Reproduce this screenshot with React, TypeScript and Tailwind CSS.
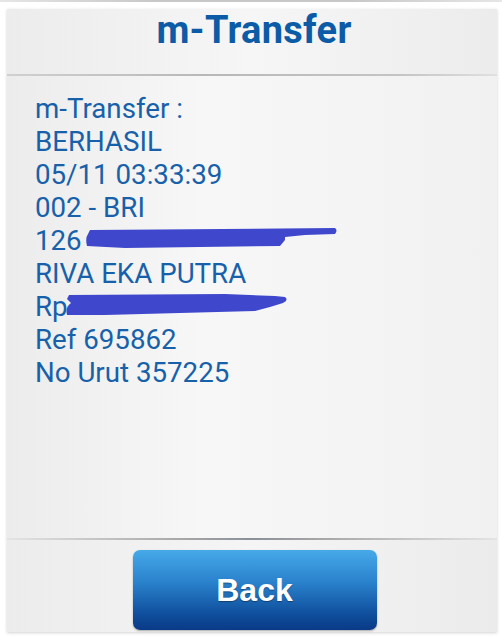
import React from "react";

const lines = [
  "m-Transfer :",
  "BERHASIL",
  "05/11 03:33:39",
  "002 - BRI",
];

export default function App() {
  return (
    <div className="w-[502px] h-[638px] bg-white relative overflow-hidden" style={{ fontFamily: "Roboto, 'Liberation Sans', sans-serif" }}>
      <div className="h-[2px] w-full bg-[linear-gradient(to_right,#e6e6e6,#c8c8c8_30%,#c8c8c8_70%,#e6e6e6)]" />
      <div className="mt-[7px] ml-[7px] w-[490px] h-[623px] flex flex-col bg-[#f2f2f2] shadow-[0_1px_3px_rgba(0,0,0,0.18)]">
        <div className="h-[65px] pt-[2px] pl-[4px] text-center bg-[linear-gradient(to_right,#ececec,#f6f6f6_50%,#ececec)]">
          <div className="text-[38px] leading-[38px] font-bold text-[#0b5ba7] tracking-[0.3px]">m-Transfer</div>
        </div>
        <div className="h-[2px] bg-[linear-gradient(to_right,#d0d0d0,#b8b8b8_40%,#c4c4c4_80%,#e0e0e0)]" />
        <div className="h-[462px] pt-[16px] pl-[28px] text-[27.7px] leading-[33px] text-[#1761aa] bg-[linear-gradient(to_right,#ececec,#f7f7f7_40%,#f1f1f1)]">
          {lines.map((l) => (
            <div key={l}>{l}</div>
          ))}
          <div className="relative">
            126
            <svg className="absolute left-[50px] top-[2px]" width="260" height="24" viewBox="0 0 260 24">
              <path d="M5 4 L250 2 Q253 4 250 8 L220 9 L200 11 L200 14 L195 20 L40 22 L2 20 Q0 12 3 8 Z" fill="#3f48cc" />
            </svg>
          </div>
          <div>RIVA EKA PUTRA</div>
          <div className="relative">
            Rp
            <svg className="absolute left-[30px] top-[1px]" width="230" height="28" viewBox="0 0 230 28">
              <path d="M4 4 L160 3 L210 5 L220 6 Q224 9 218 12 L205 16 L190 20 L40 24 L2 24 Q0 16 6 12 L2 8 Z" fill="#3f48cc" />
            </svg>
          </div>
          <div>Ref 695862</div>
          <div>No Urut 357225</div>
        </div>
        <div className="h-[2px] bg-[linear-gradient(to_right,#e4e4e4,#a8a8a8_35%,#8a8f98_50%,#a8a8a8_65%,#e4e4e4)]" />
        <div className="flex-1 flex justify-center pt-[10px] pl-[5px] bg-[linear-gradient(to_right,#ececec,#f5f5f5_50%,#ebebeb)]">
          <div className="w-[244px] h-[80px] rounded-[7px] bg-[linear-gradient(to_bottom,#46a9e9,#2a82cc_40%,#0f4f9d_80%,#0a3a86)] flex items-center justify-center shadow-[0_1px_2px_rgba(0,0,0,0.3)]">
            <span className="text-white font-bold text-[32px] [text-shadow:0_1px_1px_rgba(0,0,0,0.35)]" style={{ fontFamily: "'Liberation Sans', Arial, sans-serif" }}>Back</span>
          </div>
        </div>
      </div>
    </div>
  );
}
